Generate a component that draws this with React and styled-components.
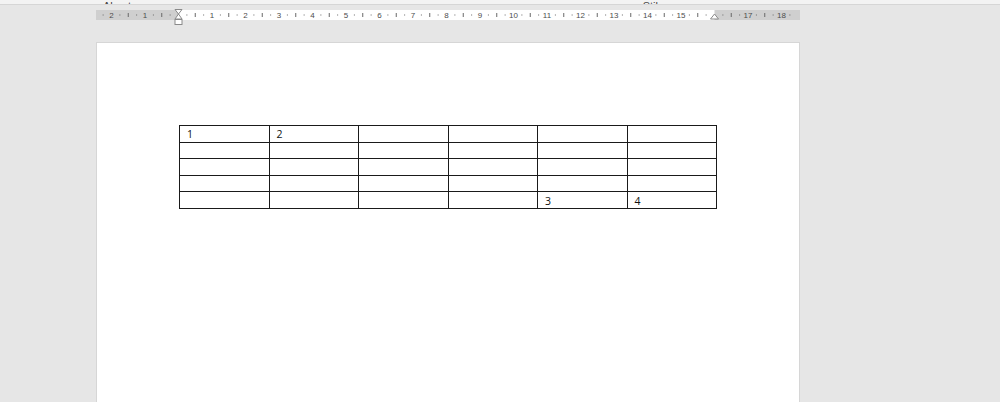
import React from 'react';
import styled, { createGlobalStyle } from 'styled-components';

const GlobalStyle = createGlobalStyle`
  html, body {
    margin: 0;
    padding: 0;
    background: #e6e6e6;
    overflow: hidden;
  }
  body {
    font-family: "Liberation Sans", Arial, sans-serif;
  }
`;

const Window = styled.div`
  display: flex;
  flex-direction: column;
  height: 402px;
  overflow: hidden;
`;

const RibbonEdge = styled.div`
  height: 4px;
  background: #f3f3f3;
  border-bottom: 1px solid #d6d6d6;
  overflow: hidden;
  display: flex;
  align-items: flex-end;
`;

const GroupLabel = styled.span`
  font-size: 11px;
  line-height: 11px;
  color: #444;
  margin-bottom: -8px;
  margin-left: ${(p) => p.$left}px;
  flex: none;
`;

const RulerBar = styled.div`
  margin: 4px 0 0 96px;
  height: 17px;
  width: 704px;
`;

const Page = styled.div`
  margin: 16px 0 0 96px;
  width: 704px;
  flex: 1;
  background: #fff;
  border: 1px solid #d6d6d6;
  border-bottom: none;
  padding: 82px 0 0 82px;
  box-sizing: border-box;
`;

const Table = styled.table`
  border-collapse: collapse;
  table-layout: fixed;
  width: 538px;
  font-family: "Open Sans", "Liberation Sans", sans-serif;
  font-size: 10.5px;
  color: #111;
`;

const Cell = styled.td`
  border: 1px solid #1a1a1a;
  height: 16.6px;
  padding: 1px 0 0 7px;
  line-height: 14px;
  vertical-align: middle;
  box-sizing: border-box;
`;

const CM = 33.5;
const ZERO = 82.5;

const Ruler = () => {
  const marks = [];
  for (let q = -10; q <= 74; q++) {
    const x = ZERO + (q / 4) * CM;
    if (x < 2 || x > 702) continue;
    if (q === 0 || q === 64) continue;
    if (q % 4 === 0) {
      marks.push(
        <text key={q} x={x} y={9} textAnchor="middle" fontSize="8" fill="#4d4d4d" fontFamily="Liberation Sans, Arial, sans-serif">
          {Math.abs(q / 4)}
        </text>
      );
    } else if (q % 2 === 0) {
      marks.push(<rect key={q} x={x - 0.5} y={4} width={1} height={4} fill="#6a6a6a" />);
    } else {
      marks.push(<rect key={q} x={x - 0.5} y={5.5} width={1} height={1} fill="#6a6a6a" />);
    }
  }
  const right = ZERO + 16 * CM;
  return (
    <svg width="704" height="17" viewBox="0 0 704 17">
      <rect x="0" y="1" width="704" height="10" fill="#cfcfcf" />
      <rect x={ZERO} y="1" width={right - ZERO} height="10" fill="#ffffff" />
      {marks}
      <path d={`M${ZERO - 3.5} 0.5 H${ZERO + 3.5} L${ZERO} 5 Z`} fill="#fff" stroke="#8a8a8a" strokeWidth="1" />
      <path d={`M${ZERO} 5 L${ZERO + 3.5} 10 H${ZERO - 3.5} Z`} fill="#fff" stroke="#8a8a8a" strokeWidth="1" />
      <rect x={ZERO - 3.5} y="10.5" width="7" height="5" fill="#fff" stroke="#8a8a8a" strokeWidth="1" />
      <path d={`M${right} 5 L${right + 4} 10 H${right - 4} Z`} fill="#fff" stroke="#8a8a8a" strokeWidth="1" />
    </svg>
  );
};

const rows = [
  ['1', '2', '', '', '', ''],
  ['', '', '', '', '', ''],
  ['', '', '', '', '', ''],
  ['', '', '', '', '', ''],
  ['', '', '', '', '3', '4'],
];

const App = () => {
  return (
    <Window>
      <GlobalStyle />
      <RibbonEdge>
        <GroupLabel $left={0}>⌟</GroupLabel>
        <GroupLabel $left={98}>Absatz</GroupLabel>
        <GroupLabel $left={93}>⌟</GroupLabel>
        <GroupLabel $left={408}>Stile</GroupLabel>
      </RibbonEdge>
      <RulerBar>
        <Ruler />
      </RulerBar>
      <Page>
        <Table>
          <tbody>
            {rows.map((r, i) => (
              <tr key={i}>
                {r.map((c, j) => (
                  <Cell key={j}>{c}</Cell>
                ))}
              </tr>
            ))}
          </tbody>
        </Table>
      </Page>
    </Window>
  );
};

export default App;
